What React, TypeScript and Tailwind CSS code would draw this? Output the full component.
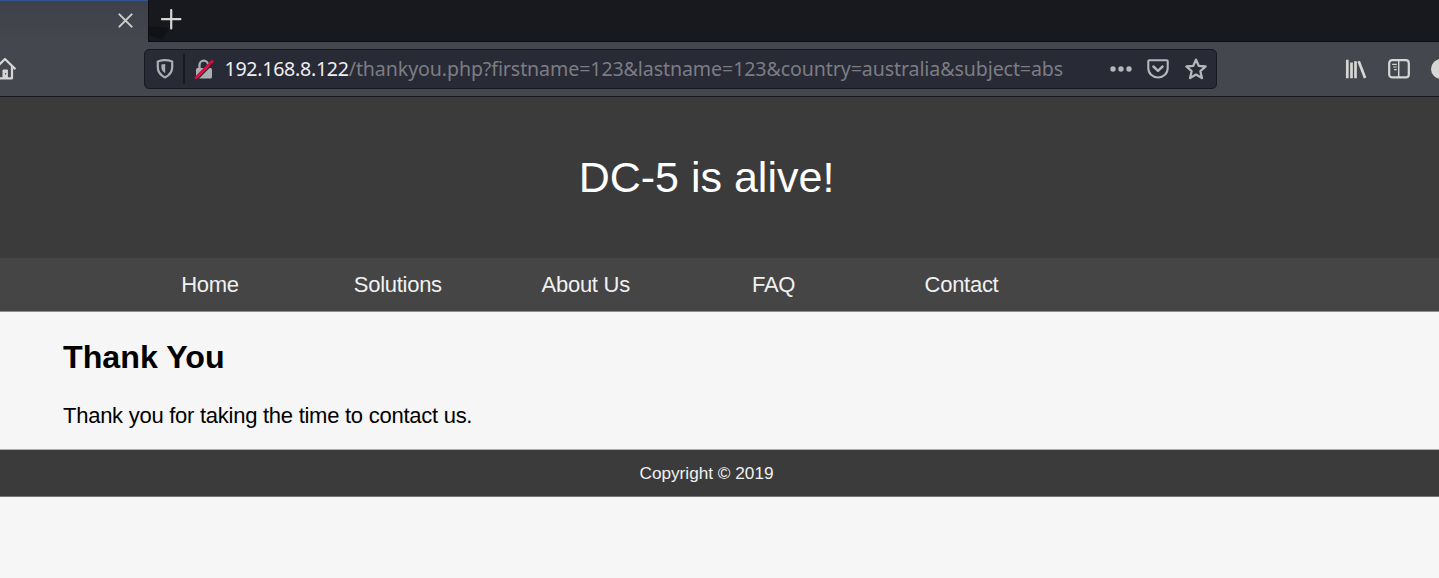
import React from "react";

const links = ["Home", "Solutions", "About Us", "FAQ", "Contact"];

function Home() {
  return (
    <svg width="26" height="26" viewBox="0 0 26 26" fill="none" stroke="#d6d6d5" strokeWidth="2.2" strokeLinejoin="round" strokeLinecap="round">
      <path d="M5.2 12.6 15 3l9.8 9.6" />
      <path d="M8 10.8V22.3h14V10.8" />
      <path d="M13 22v-8h4.4v8z" fill="#d6d6d5" strokeWidth="1" />
      <circle cx="15.6" cy="17.8" r=".8" fill="#44474e" stroke="none" />
    </svg>
  );
}

function Shield() {
  return (
    <svg width="18" height="20" viewBox="0 0 18 20" fill="none" stroke="#adaeb3" strokeWidth="2.2" strokeLinejoin="round">
      <path d="M9 1.2c2.500 0 5 .6 7.200 1.300v5.600c0 5.200-3 8.400-7.200 10.400-4.200-2-7.200-5.200-7.200-10.400V2.500C4 1.800 6.500 1.200 9 1.200z" />
      <path d="M9.200 5v9.200C6.300 12.500 5.400 10.500 5.400 8V5.500z" fill="#adaeb3" stroke="none" />
    </svg>
  );
}

function InsecureLock() {
  return (
    <svg width="20" height="21" viewBox="0 0 20 21" fill="none">
      <path d="M5.500 10V6a4.300 4.300 0 0 1 8.600 0v4" stroke="#adaeb3" strokeWidth="2.300" />
      <rect x="2" y="9" width="16" height="10.500" rx="1.500" fill="#adaeb3" />
      <path d="M2.800 20.800 20.500 3" stroke="#282a36" strokeWidth="1.500" />
      <path d="M1 19.500 19 1.500" stroke="#e5063b" strokeWidth="2.500" />
    </svg>
  );
}

function Pocket() {
  return (
    <svg width="22" height="20" viewBox="0 0 22 20" fill="none" stroke="#b5b6ba" strokeWidth="2.100" strokeLinecap="round" strokeLinejoin="round">
      <path d="M2.300 1.200h17.400a1 1 0 0 1 1 1V9C20.700 14.500 16.500 18.500 11 18.500S1.300 14.500 1.300 9V2.200a1 1 0 0 1 1-1z" />
      <path d="m6.400 7.500 4.600 4.300 4.600-4.300" strokeWidth="2.400" />
    </svg>
  );
}

function Star() {
  return (
    <svg width="22" height="22" viewBox="0 0 22 22" fill="none" stroke="#b5b6ba" strokeWidth="2.300" strokeLinejoin="round">
      <path d="m11 1.600 2.700 6.200 6.900.7-5.200 4.700 1.500 6.900-5.900-3.500-5.900 3.500 1.500-6.900L1.400 8.500l6.900-.7z" />
    </svg>
  );
}

function Library() {
  return (
    <svg width="22" height="20" viewBox="0 0 22 20" fill="none" stroke="#d6d6d5" strokeWidth="2.700">
      <path d="M2.300.800v18.400M6.500 3.500v15.700M10.500 2.200v17M13.700 2.200l6.400 16.700" />
    </svg>
  );
}

function Sidebar() {
  return (
    <svg width="22" height="20" viewBox="0 0 22 20" fill="none" stroke="#d6d6d5">
      <rect x="1.200" y="1.200" width="19.600" height="17.200" rx="3" strokeWidth="2.200" />
      <path d="M10.700 2v16" strokeWidth="1.500" />
      <path d="M4.200 5.300h4.500M5.200 8h3.500M6 10.700h2.700" strokeWidth="1.200" />
    </svg>
  );
}

export default function App() {
  return (
    <div className="h-[578px] w-[1439px] overflow-hidden bg-[#f6f6f6] font-['Liberation_Sans',Arial,sans-serif]">
      <header className="h-[97px] overflow-hidden border-b border-[#18191e] bg-[#44474e]">
        <div className="flex h-[42px]">
          <div className="flex w-[148px] justify-end border-t border-[#33558e] bg-linear-to-b from-[#3e4149] to-[#44474e] pt-[12px] pr-[15px]">
            <svg width="15" height="15" viewBox="0 0 14 14" stroke="#cecece" strokeWidth="1.900" strokeLinecap="round">
              <path d="m1.300 1.300 11.400 11.400m0-11.400L1.300 12.700" />
            </svg>
          </div>
          <div className="flex flex-1 border-b border-l border-[#0e0f13] bg-[#18191e]">
            <svg width="34" height="41" viewBox="0 0 34 41" fill="none">
              <path d="M0 26 20 28 13 39.500 0 35z" fill="#111216" />
              <path d="M22.200 10v18.400M13 19.200h18.400" stroke="#d6d6d5" strokeWidth="2.200" strokeLinecap="round" />
            </svg>
          </div>
        </div>
        <div className="flex h-[54px] items-center">
          <div className="-ml-[10px] w-[154px] shrink-0">
            <Home />
          </div>
          <div className="flex h-[40px] w-[1073px] shrink-0 items-center rounded-[5px] border-[1.500px] border-[#18191e] bg-[#282a36] pl-[11px]">
            <Shield />
            <div className="mr-[9px] ml-[9px] h-[30px] w-[1.500px] bg-[#18191e]" />
            <InsecureLock />
            <div className="ml-[11px] w-[884px] font-['Noto_Sans',sans-serif] text-[19.600px] leading-[28px] tracking-[-0.100px] whitespace-nowrap text-[#7c7d83]">
              <span className="tracking-[-0.280px] text-[#eeeeef]">192.168.8.122</span>/thankyou.php?firstname=123&amp;lastname=123&amp;country=australia&amp;subject=abs
            </div>
            <svg width="24" height="8" viewBox="0 0 24 8" fill="#b5b6ba">
              <circle cx="4" cy="4" r="2.700" />
              <circle cx="12" cy="4" r="2.700" />
              <circle cx="20" cy="4" r="2.700" />
            </svg>
            <div className="ml-[14px]"><Pocket /></div>
            <div className="ml-[16px]"><Star /></div>
          </div>
          <div className="ml-[128px] flex shrink-0 items-center">
            <Library />
            <div className="ml-[21px]"><Sidebar /></div>
            <div className="ml-[21px] size-5 rounded-full bg-[#d6d6d5]" />
          </div>
        </div>
      </header>
      <section className="flex h-[161px] w-full items-center justify-center bg-[#3b3b3b] pr-[26px]">
        <h1 className="text-[43px] text-white">DC-5 is alive!</h1>
      </section>
      <nav className="flex h-[54px] items-center border-b border-[#8d8d8d] bg-[#454545] pl-[116px] text-[22px] tracking-[-0.280px] text-[#f1f1f1]">
        {links.map((l) => (
          <a key={l} className="w-[187.900px] text-center">{l}</a>
        ))}
      </nav>
      <main className="h-[137px] pt-[26px] pl-[63px] text-black">
        <h2 className="text-[32.200px] leading-[38px] font-bold">Thank You</h2>
        <p className="mt-[26px] text-[22px] leading-[28px] tracking-[-0.260px]">Thank you for taking the time to contact us.</p>
      </main>
      <footer className="flex h-[48px] items-center justify-center border-t border-b border-t-[#adadad] border-b-[#757575] bg-[#3b3b3b] pt-[2px] pr-[26px] text-[17.200px] text-[#f1f1f1]">
        Copyright © 2019
      </footer>
    </div>
  );
}
